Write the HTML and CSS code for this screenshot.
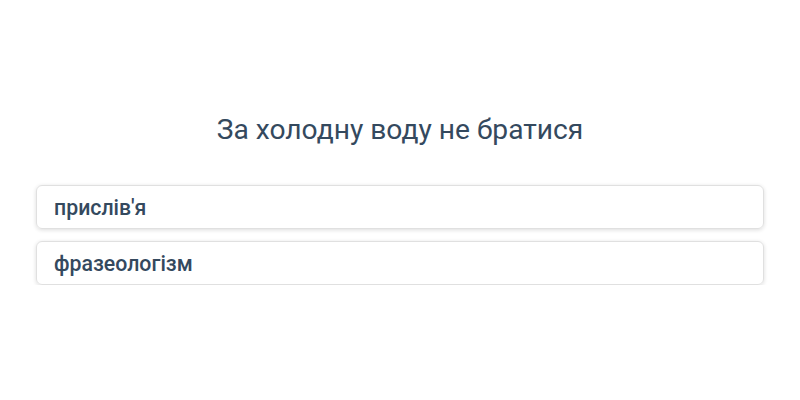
FILE: index.html
```html
<!DOCTYPE html>
<html lang="uk">
<head>
<meta charset="utf-8">
<link rel="stylesheet" href="styles.css">
</head>
<body>
<main class="quiz">
  <h1 class="question">За холодну воду не братися</h1>
  <div class="options">
    <div class="option">прислів'я</div>
    <div class="option">фразеологізм</div>
  </div>
</main>
</body>
</html>
```
FILE: styles.css
```css
html, body {
  margin: 0;
  padding: 0;
  background: #ffffff;
}
body {
  font-family: Roboto, "Noto Sans", sans-serif;
  color: #2c3e50;
}
.quiz {
  padding: 112px 36px 0;
}
.question {
  margin: 0 0 37px;
  text-align: center;
  font-size: 28.2px;
  font-weight: 400;
  line-height: 36px;
  color: #34495e;
}
.options {
  display: flex;
  flex-direction: column;
  gap: 12px;
}
.option {
  height: 44px;
  box-sizing: border-box;
  display: flex;
  align-items: center;
  padding: 0 17px;
  border: 1px solid #e0e0e0;
  border-radius: 6px;
  box-shadow: 0 1px 4px rgba(0,0,0,0.14);
  font-size: 21.3px;
  font-weight: 500;
  color: #34495e;
}
```
